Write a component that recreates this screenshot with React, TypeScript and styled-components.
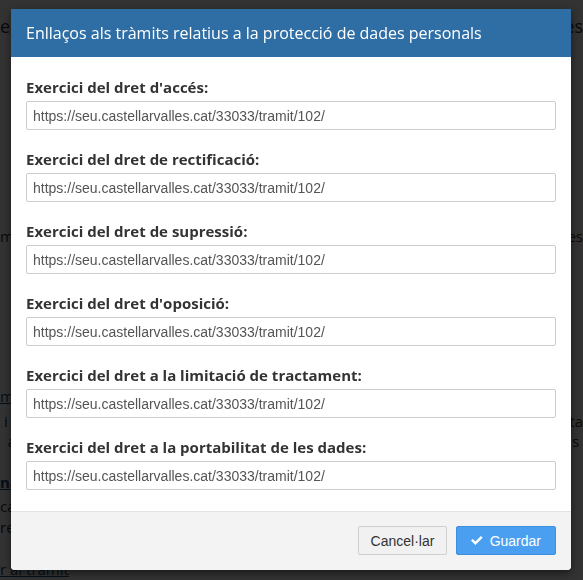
import styled, { createGlobalStyle } from "styled-components";

const GlobalStyle = createGlobalStyle`
    html, body {
        margin: 0;
        padding: 0;
        overflow: hidden;
        background: #fff;
    }
    body {
        font-family: "Open Sans", "Liberation Sans", sans-serif;
        color: #333;
    }
`;

const fields = [
    "Exercici del dret d'accés:",
    "Exercici del dret de rectificació:",
    "Exercici del dret de supressió:",
    "Exercici del dret d'oposició:",
    "Exercici del dret a la limitació de tractament:",
    "Exercici del dret a la portabilitat de les dades:",
];

const URL = "https://seu.castellarvalles.cat/33033/tramit/102/";

const Page = styled.div`
    width: 583px;
    height: 600px;
    display: flex;
    flex-direction: column;
    font-size: 15px;
    line-height: 20px;
    color: #333;
`;

const Line = styled.div<{ $top: number }>`
    display: flex;
    justify-content: space-between;
    margin-top: ${(p) => p.$top}px;
    white-space: nowrap;
`;

const PageLink = styled.a<{ $bold?: boolean }>`
    color: #1a4d7a;
    text-decoration: underline;
    font-weight: ${(p) => (p.$bold ? 700 : 400)};
`;

const Overlay = styled.div`
    position: fixed;
    inset: 0;
    background: rgba(0, 0, 0, 0.8);
`;

const Modal = styled.div`
    position: fixed;
    left: 11px;
    top: 9px;
    width: 560px;
    background: #fff;
    border-radius: 0 0 4px 4px;
    box-shadow: 0 3px 9px rgba(0, 0, 0, 0.5);
    display: flex;
    flex-direction: column;
    overflow: hidden;
`;

const Header = styled.div`
    height: 48px;
    background: #2f6ea5;
    color: #fff;
    display: flex;
    align-items: center;
    padding: 0 15px;
    font-size: 16px;
`;

const Body = styled.div`
    padding: 20px 15px 21px;
    display: flex;
    flex-direction: column;
`;

const Group = styled.div`
    display: flex;
    flex-direction: column;
    margin-bottom: 19px;

    &:last-child {
        margin-bottom: 0;
    }

    label {
        font-weight: 700;
        font-size: 15px;
        line-height: 20px;
        margin-bottom: 4px;
        color: #333;
    }
`;

const Input = styled.input`
    box-sizing: border-box;
    height: 29px;
    width: 100%;
    border: 1px solid #ccc;
    border-radius: 2px;
    padding: 0 6px;
    font-family: "Liberation Sans", Arial, sans-serif;
    font-size: 14px;
    color: #555;
    background: #fff;
    outline: none;
`;

const Footer = styled.div`
    border-top: 1px solid #e3e3e3;
    background: #f3f3f3;
    padding: 14px 15px 15px;
    display: flex;
    justify-content: flex-end;
    gap: 9px;
`;

const Button = styled.button<{ $primary?: boolean }>`
    box-sizing: border-box;
    height: 29px;
    display: flex;
    align-items: center;
    justify-content: center;
    gap: 7px;
    border-radius: 2px;
    font-family: "Liberation Sans", Arial, sans-serif;
    font-size: 14px;
    padding: 0 14px;
    cursor: pointer;
    border: 1px solid ${(p) => (p.$primary ? "#3b8fde" : "#cfcfcf")};
    background: ${(p) => (p.$primary ? "#4a9ff0" : "#f1f1f1")};
    color: ${(p) => (p.$primary ? "#fff" : "#333")};
    width: ${(p) => (p.$primary ? "100px" : "89px")};
`;

// fa-check style tick
const CheckIcon = () => (
    <svg width="13" height="11" viewBox="0 0 13 11">
        <path
            d="M0 5.6 L1.9 3.7 L4.9 6.7 L11.1 0.5 L13 2.4 L4.9 10.5 Z"
            fill="#fff"
        />
    </svg>
);

const App = () => {
    return (
        <>
            <GlobalStyle />
            <Page>
                <Line $top={16} style={{ fontSize: "18px" }}>
                    <span>el</span>
                    <span>es</span>
                </Line>
                <Line $top={190}>
                    <span>me</span>
                    <span>es</span>
                </Line>
                <Line $top={140}>
                    <PageLink>m</PageLink>
                </Line>
                <Line $top={5}>
                    <span>&nbsp;i</span>
                    <span>ta</span>
                </Line>
                <Line $top={0}>
                    <span>&nbsp;&nbsp;a</span>
                    <span>s&nbsp;</span>
                </Line>
                <Line $top={21}>
                    <PageLink $bold>na</PageLink>
                </Line>
                <Line $top={4}>
                    <span>ca</span>
                </Line>
                <Line $top={1}>
                    <span>re</span>
                </Line>
                <Line $top={22}>
                    <PageLink>r al tràmit</PageLink>
                </Line>
            </Page>
            <Overlay />
            <Modal>
                <Header>
                    Enllaços als tràmits relatius a la protecció de dades
                    personals
                </Header>
                <Body>
                    {fields.map((f) => (
                        <Group key={f}>
                            <label>{f}</label>
                            <Input defaultValue={URL} readOnly />
                        </Group>
                    ))}
                </Body>
                <Footer>
                    <Button>Cancel·lar</Button>
                    <Button $primary>
                        <CheckIcon />
                        Guardar
                    </Button>
                </Footer>
            </Modal>
        </>
    );
};

export default App;
